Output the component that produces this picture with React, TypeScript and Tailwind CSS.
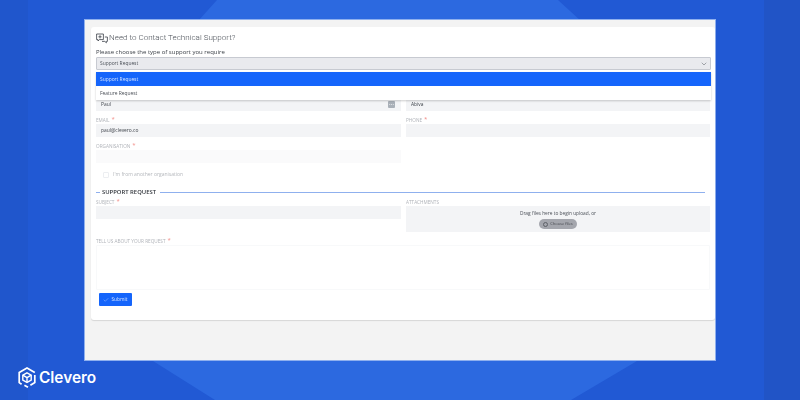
import React from 'react';
import { Check, ChevronDown } from 'lucide-react';

function Label({ text, required }: { text: string; required?: boolean }) {
  return <div className="h-[7px] flex items-start text-[4.7px] leading-[7px] uppercase text-[#b0b3b9]">
      <span>{text}</span>
      {required && <span className="ml-[2px] text-[6px] leading-[5px] text-[#f28b86]">*</span>}
    </div>;
}

function SupportIcon() {
  return <svg width="12" height="11" viewBox="0 0 12 11" fill="none" stroke="#3a3f47" strokeWidth="0.8">
      <path d="M0.6 1h6.8v5.6H3.4L2 8V6.6H0.6z" />
      <path d="M4 2.2v3.2M2.4 3.8h3.2" />
      <path d="M8.8 4h2.6v4.4h-1v1.4L8.8 8.4H6" />
    </svg>;
}

function CleveroMark() {
  return <svg width="18" height="21" viewBox="0 0 18 21" fill="none" stroke="white" strokeWidth="1.7">
      <path d="M3.6 17.2 1.2 15.6V5.4L9 1l7.8 4.4" />
      <path d="M16.8 8v7.6L12.4 18.2" />
      <path d="M10 20.2 6.4 18.2" />
      <path d="M9 5.8l4.2 2.4v4.8L9 15.4l-4.2-2.4V8.2z" strokeWidth="1.4" />
      <path d="M4.8 8.2 9 10.6l4.2-2.4M9 10.6v4.8" strokeWidth="1.4" />
    </svg>;
}

export default function App() {
  return <div className="relative w-[800px] h-[400px] overflow-hidden bg-[#2159d4] font-['Open_Sans',sans-serif]">
      {/* background shapes */}
      <svg className="absolute inset-0" width="800" height="400" viewBox="0 0 800 400">
        <rect x="0" y="0" width="28" height="400" fill="#2056cc" />
        <rect x="764" y="0" width="36" height="400" fill="#2154c6" />
        <polygon points="217,0 558,0 700,130 700,320 637,361 571,400 215,400 153,361 100,330 100,130" fill="#2c69e0" />
      </svg>

      <div className="relative flex flex-col h-full pl-[84px] pt-[19px]">
        {/* window */}
        <div className="w-[632px] h-[342px] bg-[#f3f3f3] border border-[#8fb0ee] pl-[6px] pt-[7px] shrink-0">
          <div className="relative w-[624px] h-[293px] bg-white rounded-[3px] shadow-[0_1px_1px_rgba(0,0,0,0.12)] px-[5px] text-[#3d4249] blur-[0.3px]">
            <div className="h-[21px] pt-[2px] flex items-center gap-[1px] text-[8.05px] font-light font-['Roboto',sans-serif] text-[#4a4f57]">
              <SupportIcon />
              <span>Need to Contact Technical Support?</span>
            </div>
            <div className="h-[9px] flex items-center text-[6px] text-[#3d4249]">Please choose the type of support you require</div>

            <div className="w-[615px] h-[13px] bg-[#e9eaee] border border-[#c7cad1] rounded-[1px] flex items-center justify-between pl-[3px] pr-[2px] pt-px text-[4.9px] text-[#4a4f57]">
              <span>Support Request</span>
              <ChevronDown size={8} strokeWidth={1.5} className="text-[#555a63]" />
            </div>

            {/* dropdown */}
            <div className="absolute left-[5px] top-[45px] w-[615px] h-[28px] z-10 bg-white shadow-[0_1px_2px_rgba(0,0,0,0.2)] text-[4.9px]">
              <div className="h-[14px] pl-[4px] pt-px flex items-center bg-[#1565fb] text-[#d6e4ff]">Support Request</div>
              <div className="h-[14px] pl-[4px] pt-px flex items-center text-[#4a4f57]">Feature Request</div>
            </div>

            <div className="mt-[28px] grid grid-cols-[305px_304px] gap-x-[5px] text-[4.9px] text-[#3d4249]">
              <div className="h-[13px] bg-[#f3f4f6] flex items-center justify-between pl-[5px] pr-[6px]">
                <span>Paul</span>
                <span className="w-[7px] h-[7px] rounded-[1px] bg-[#a9b0b8] text-white text-[5px] leading-[6px] text-center">⋯</span>
              </div>
              <div className="h-[13px] bg-[#f3f4f6] flex items-center pl-[5px]">Abiva</div>

              <div className="mt-[6px]">
                <Label text="Email" required />
                <div className="h-[13px] bg-[#f3f4f6] flex items-center pl-[5px]">paul@clevero.co</div>
              </div>
              <div className="mt-[6px]">
                <Label text="Phone" required />
                <div className="h-[13px] bg-[#f3f4f6]"></div>
              </div>

              <div className="mt-[6px]">
                <Label text="Organisation" required />
                <div className="h-[13px] bg-[#fafafb]"></div>
              </div>
              <div></div>
            </div>

            <div className="mt-[6px] ml-[7px] h-[12px] flex items-center gap-[4px] text-[5px] text-[#b4b7bc]">
              <span className="w-[6px] h-[6px] rounded-[1px] border border-[#eceef1]"></span>
              <span>I'm from another organisation</span>
            </div>

            <div className="mt-[7px] h-[8px] flex items-center pr-[5px]">
              <span className="w-[4px] h-px bg-[#8fb0ee]"></span>
              <span className="ml-[2px] text-[5.9px] font-semibold text-[#33373d] whitespace-nowrap">SUPPORT REQUEST</span>
              <span className="ml-[4px] flex-1 h-px bg-[#8fb0ee]"></span>
            </div>

            <div className="mt-[3px] grid grid-cols-[305px_304px] gap-x-[5px]">
              <div>
                <Label text="Subject" required />
                <div className="h-[13px] bg-[#f3f4f6]"></div>
              </div>
              <div>
                <Label text="Attachments" />
                <div className="h-[26px] bg-[#f3f4f6] flex flex-col items-center pt-[3px] text-[4.8px] text-[#4a4f57]">
                  <span className="leading-[8px]">Drag files here to begin upload, or</span>
                  <span className="mt-[2px] h-[10px] w-[38px] rounded-full bg-[#a4a6ad] flex items-center justify-center gap-[2px] text-[4px] text-[#44474d]">
                    <span className="w-[5px] h-[5px] rounded-full border border-[#5d6067]"></span>
                    Choose files
                  </span>
                </div>
              </div>
            </div>

            <div className="pt-[6px]">
              <Label text="Tell us about your request" required />
              <div className="w-[614px] h-[45px] border border-[#f8f9fa] rounded-[1px]"></div>
            </div>

            <button className="mt-[3px] ml-[3px] w-[33px] h-[13px] bg-[#1565fb] rounded-[1px] flex items-center justify-center gap-[2px] text-[4.9px] text-[#d6e4ff]">
              <Check size={6} strokeWidth={1.5} />
              Submit
            </button>
          </div>
        </div>
      </div>

      {/* logo */}
      <div className="absolute left-[18px] top-[367px] flex items-center gap-[3px] text-white">
        <CleveroMark />
        <span className="text-[15.4px] leading-[21px] font-semibold font-['Inter',sans-serif]">Clevero</span>
      </div>
    </div>;
}
